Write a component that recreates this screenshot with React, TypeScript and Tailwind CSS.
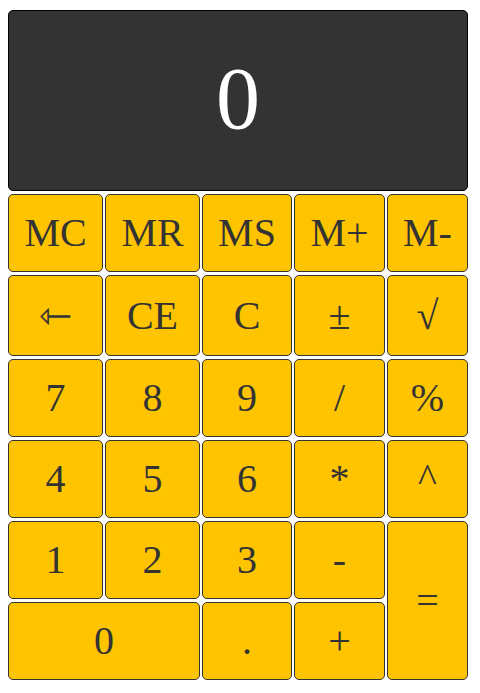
import React, { useState } from 'react';

type Key = { label: string; value?: string; span?: string };

const KEYS: Key[] = [
  { label: 'MC' }, { label: 'MR' }, { label: 'MS' }, { label: 'M+' }, { label: 'M-' },
  { label: '⇽', value: 'back' }, { label: 'CE' }, { label: 'C' }, { label: '±' }, { label: '√' },
  { label: '7' }, { label: '8' }, { label: '9' }, { label: '/' }, { label: '%' },
  { label: '4' }, { label: '5' }, { label: '6' }, { label: '*' }, { label: '^' },
  { label: '1' }, { label: '2' }, { label: '3' }, { label: '-' },
  { label: '=', span: 'row-span-2' },
  { label: '0', span: 'col-span-2' }, { label: '.' }, { label: '+' },
];

export default function App() {
  const [display, setDisplay] = useState('0');

  const press = (k: string) => {
    if (/^[0-9]$/.test(k)) setDisplay(d => (d === '0' ? k : d + k));
    else if (k === 'C' || k === 'CE') setDisplay('0');
    else if (k === 'back') setDisplay(d => (d.length > 1 ? d.slice(0, -1) : '0'));
  };

  return (
    <div className="min-h-screen bg-white pt-[10px] pl-[8px] font-['Liberation_Serif',serif]">
      <div className="grid grid-cols-[95px_95px_90px_91px_81px] grid-rows-[181px_78px_81px_78px_78px_78px_78px] gap-x-[2px] gap-y-[3px] w-[460px]">
        <div className="col-span-5 flex items-center justify-center rounded-[5px] border border-black bg-[#333333] pb-[3px] text-[88px] leading-none text-white">
          {display}
        </div>
        {KEYS.map(k => (
          <button
            key={k.label}
            onClick={() => press(k.value ?? k.label)}
            className={`${k.span ?? ''} flex items-center justify-center rounded-[5px] border border-[#333333] bg-[#ffc400] text-[40px] leading-none text-[#333333]`}
          >
            {k.label}
          </button>
        ))}
      </div>
    </div>
  );
}
